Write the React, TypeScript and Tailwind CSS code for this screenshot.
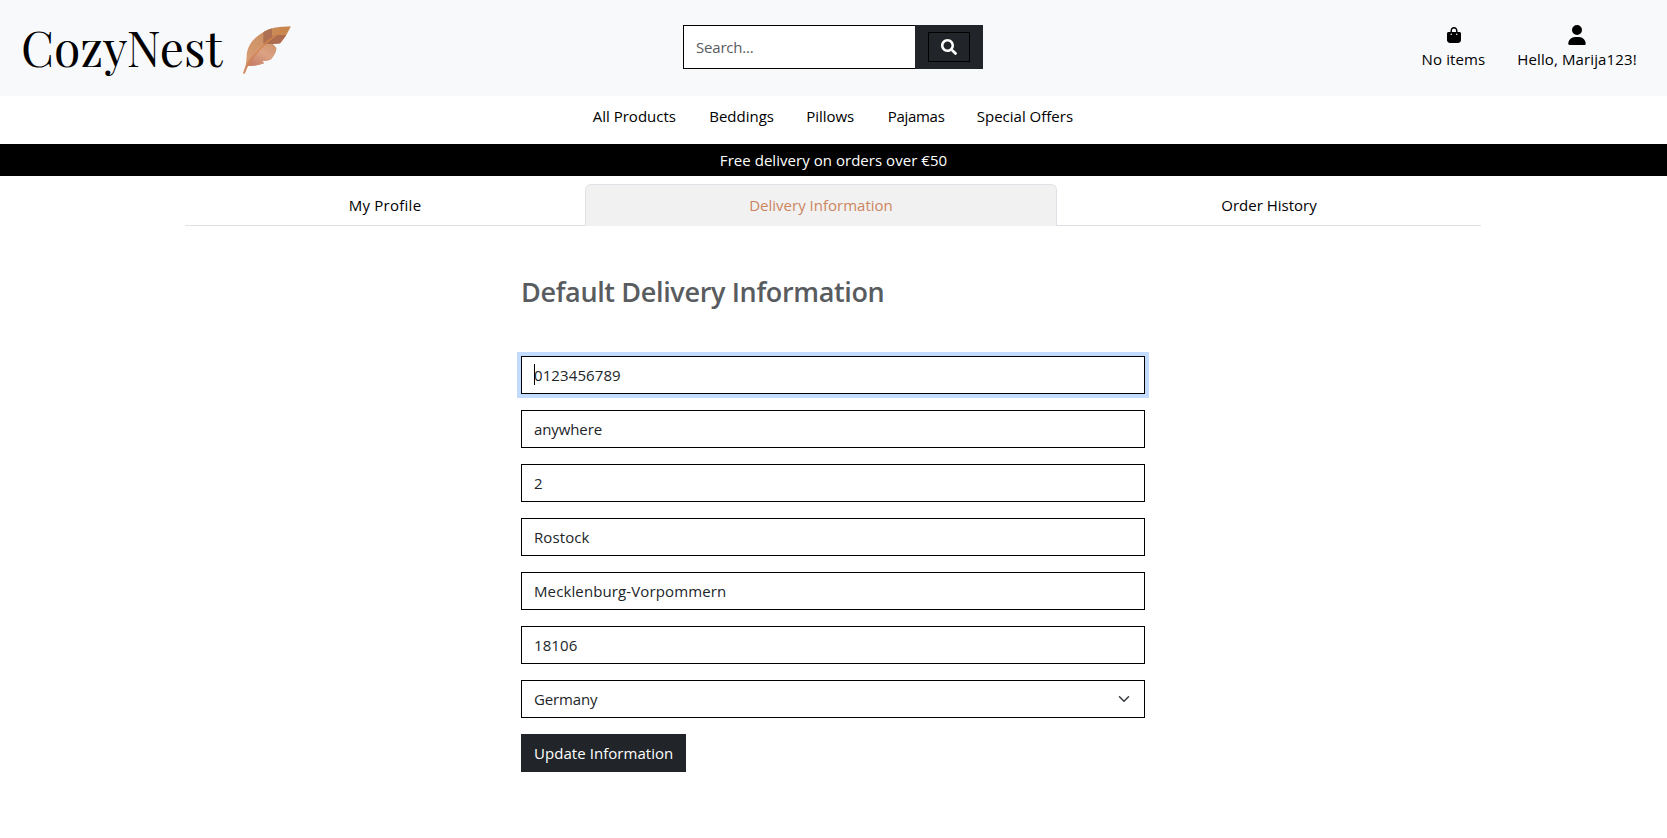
import { FaSearch } from "react-icons/fa";
import { FaBagShopping, FaUser } from "react-icons/fa6";

function Feather() {
  return (
    <svg className="ml-[7px] h-[65px] w-[70px]" viewBox="0 0 210 195" fill="none">
      <defs>
        <linearGradient id="vane" x1="150" y1="30" x2="60" y2="140" gradientUnits="userSpaceOnUse">
          <stop offset="0" stopColor="#c8864e" />
          <stop offset="0.45" stopColor="#cc9264" />
          <stop offset="1" stopColor="#d99d74" />
        </linearGradient>
        <linearGradient id="lower" x1="125" y1="80" x2="80" y2="152" gradientUnits="userSpaceOnUse">
          <stop offset="0" stopColor="#d0946c" />
          <stop offset="0.5" stopColor="#dba283" />
          <stop offset="1" stopColor="#c9826c" />
        </linearGradient>
        <clipPath id="outline">
          <path d="M183 34C160 34 128 36 102 50C72 67 50 92 50 125L47 152C62 154 84 152 102 145L97 138C108 138 120 136 124 132C134 120 139 108 139 99L128 87L150 85C163 72 174 52 183 34Z" />
        </clipPath>
      </defs>
      <g clipPath="url(#outline)">
        <rect x="40" y="30" width="150" height="130" fill="url(#vane)" />
        <path d="M48 152C62 120 90 90 128 65L190 90L130 160Z" fill="url(#lower)" />
        <path d="M100 40H126V66L100 86Z" fill="#ae7052" />
        <path d="M100 87L132 60H172L150 87Z" fill="#ad6b50" />
      </g>
      <path d="M43 174C54 142 84 96 157 47" stroke="#d38549" strokeWidth="4" strokeLinecap="round" />
      <path d="M42 173L50 150" stroke="#cf8a62" strokeWidth="5" strokeLinecap="round" />
    </svg>
  );
}

const links = [
  { label: "All Products", cls: "w-[86.5px]" },
  { label: "Beddings", cls: "w-[67px]" },
  { label: "Pillows", cls: "w-[51.5px] tracking-[-0.05px]" },
  { label: "Pajamas", cls: "w-[59px] tracking-[-0.3px]" },
  { label: "Special Offers", cls: "w-[97.5px]" },
];

const fields = [
  { value: "0123456789", cls: "tracking-[0.1px]" },
  { value: "anywhere", cls: "tracking-[-0.1px]" },
  { value: "2", cls: "" },
  { value: "Rostock", cls: "tracking-[0.1px]" },
  { value: "Mecklenburg-Vorpommern", cls: "tracking-[0.12px]" },
  { value: "18106", cls: "tracking-[0.1px]" },
];

export default function App() {
  return (
    <div className="min-h-[838px] bg-white font-['Open_Sans','Noto_Sans',sans-serif] text-[15px] leading-6 text-black">
      <header className="flex h-24 items-start bg-[#f8f9fb]">
        <a className="flex w-[683px] items-start pl-[21px] pt-[15px]">
          <span className="w-[202px] whitespace-nowrap font-['Playfair_Display','Liberation_Serif',serif] text-[48px] leading-[64px]">
            CozyNest
          </span>
          <Feather />
        </a>
        <form className="mt-[25px] flex h-11 w-[300px]">
          <div className="flex w-[232px] items-center border border-r-0 border-black bg-white pl-3 tracking-[-0.2px] text-[#595c5f]">
            Search...
          </div>
          <div className="flex w-[68px] items-center justify-center bg-[#212529]">
            <button type="button" aria-label="Search" className="flex h-[30px] w-[42px] items-center justify-center border border-black">
              <FaSearch className="size-4 text-white" />
            </button>
          </div>
        </form>
        <div className="ml-auto mr-[30px] flex gap-[31px] pt-[25px] tracking-[0.12px]">
          <div className="flex w-[65px] flex-col items-center">
            <span className="flex h-[22px] items-start pt-[2px]">
              <FaBagShopping className="h-4 w-3.5" />
            </span>
            <span className="whitespace-nowrap">No items</span>
          </div>
          <div className="flex w-[120px] flex-col items-center">
            <span className="flex h-[22px] items-start">
              <FaUser className="h-5 w-[18px]" />
            </span>
            <span className="whitespace-nowrap">Hello, Marija123!</span>
          </div>
        </div>
      </header>

      <nav className="flex h-12 justify-center gap-[30px] pt-2">
        {links.map((l) => (
          <a key={l.label} className={`whitespace-nowrap ${l.cls}`}>
            {l.label}
          </a>
        ))}
      </nav>

      <div className="h-8 bg-black pt-1 text-center tracking-[0.04px] text-white">
        Free delivery on orders over €50
      </div>

      <div className="ml-[185px] mt-2 flex h-[42px] w-[1296px] text-center">
        <div className="w-[400px] border-b border-[#dee2e6] pt-[9px] tracking-[0.25px]">My Profile</div>
        <div className="w-[465px] grow rounded-t-md border border-b-0 border-[#dee2e6] bg-[#f1f1f1] pt-2 text-[#cd8560]">
          Delivery Information
        </div>
        <div className="w-[424px] border-b border-[#dee2e6] pt-[9px]">Order History</div>
      </div>

      <main className="ml-[521px] w-[624px] pt-[49px]">
        <h1 className="text-[27px] font-semibold leading-[34px] tracking-[-0.35px] text-[#595c5f]">
          Default Delivery Information
        </h1>
        <form className="mt-[47px] flex flex-col gap-4 text-[#212529]">
          {fields.map((f, i) => (
            <div
              key={f.value}
              className={`relative flex h-[38px] items-center border border-black bg-white px-3 ${f.cls} ${
                i === 0 ? "ring-4 ring-[#c2dbfe]" : ""
              }`}
            >
              {i === 0 && <span className="absolute left-3 top-[7px] h-[21px] w-px bg-black" />}
              {f.value}
            </div>
          ))}
          <div className="flex h-[38px] items-center justify-between border border-black bg-white pl-3 pr-[14px] tracking-[-0.15px]">
            Germany
            <svg className="size-3" viewBox="0 0 16 16" fill="none" stroke="#343a40" strokeWidth="2" strokeLinecap="round" strokeLinejoin="round">
              <path d="m2 5 6 6 6-6" />
            </svg>
          </div>
          <button type="button" className="h-[38px] w-[165px] bg-[#212529] pl-[13px] text-left tracking-[0.05px] text-white">
            Update Information
          </button>
        </form>
      </main>
    </div>
  );
}
